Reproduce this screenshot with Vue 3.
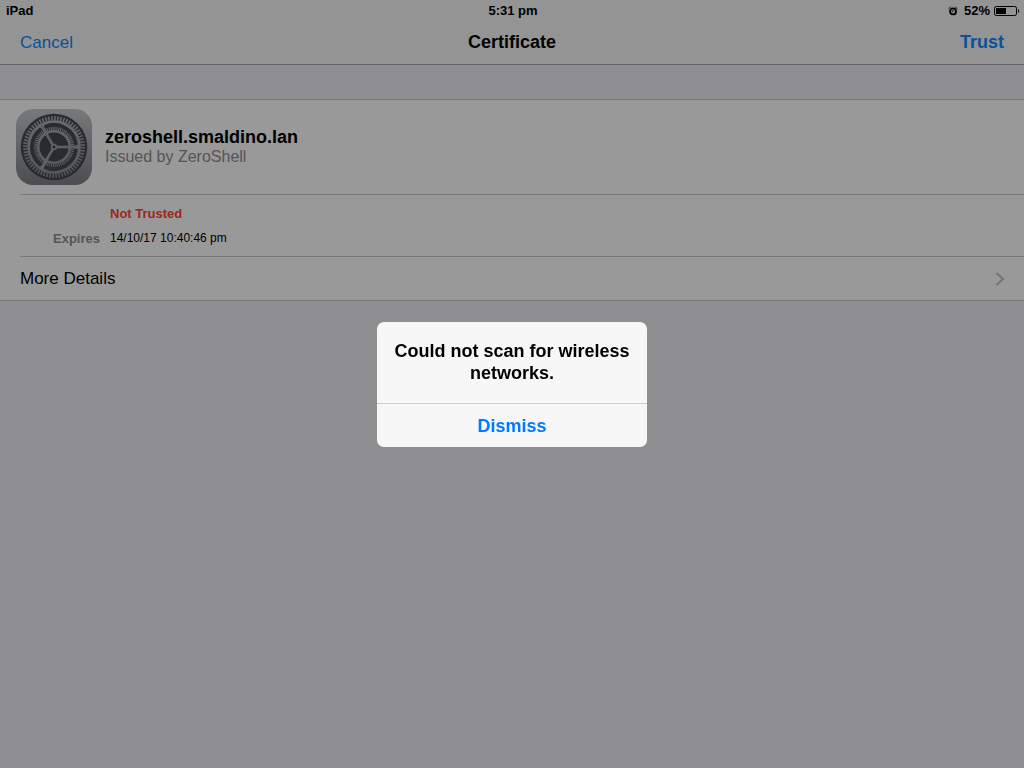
<script setup>
const point = (radius, degrees) => {
  const a = (degrees * Math.PI) / 180
  return `${(radius * Math.cos(a)).toFixed(2)} ${(radius * Math.sin(a)).toFixed(2)}`
}

const sector = (radius, inner, from, to) =>
  `M${point(inner, from)}L${point(radius, from)}A${radius} ${radius} 0 0 1 ${point(radius, to)}L${point(inner, to)}A${inner} ${inner} 0 0 0 ${point(inner, from)}Z`

const slots = [[8, 112], [128, 232], [248, 352]].map(([a, b]) => sector(22.5, 18.5, a, b))
const spokes = [0, 120, 240].map((a) => `M0 0L${point(26, a)}`)
</script>

<template>
  <div class="screen">
    <header class="top">
      <div class="status">
        <span>iPad</span>
        <span>5:31 pm</span>
        <span class="power">
          <svg class="alarm" width="10" height="10" viewBox="0 0 10 10" aria-hidden="true">
            <circle cx="5" cy="5.4" r="3" fill="none" stroke="#000" stroke-width="1.8" />
            <path d="M.6 2.8 2.6 1M7.4 1l2 1.8" stroke="#000" stroke-width="1" />
            <path d="M5 3.400V5.6H3.6" fill="none" stroke="#000" stroke-width=".8" />
          </svg>
          <span>52%</span>
          <svg class="battery" width="26" height="10" viewBox="0 0 26 10" aria-hidden="true">
            <rect x="0.5" y="0.5" width="22" height="9" rx="1.8" fill="none" stroke="#000" />
            <rect x="2" y="2" width="10" height="6" fill="#000" />
            <path d="M24 3c1.3.4 1.3 3.6 0 4z" fill="#000" />
          </svg>
        </span>
      </div>
      <nav class="bar">
        <button type="button">Cancel</button>
        <h1>Certificate</h1>
        <button type="button" class="trust">Trust</button>
      </nav>
    </header>

    <main class="group">
      <section class="identity">
        <svg class="gear" width="76" height="76" viewBox="-38 -38 76 76" aria-hidden="true">
          <defs>
            <linearGradient id="plate" x1="0" y1="0" x2="0" y2="1">
              <stop offset="0" stop-color="#c8cacc" />
              <stop offset="1" stop-color="#7e8085" />
            </linearGradient>
            <linearGradient id="metal" gradientUnits="userSpaceOnUse" x1="0" y1="-32" x2="0" y2="32">
              <stop offset="0" stop-color="#b4b6b9" />
              <stop offset="1" stop-color="#8b8c90" />
            </linearGradient>
          </defs>
          <rect x="-38" y="-38" width="76" height="76" rx="17" fill="url(#plate)" />
          <circle r="33.3" fill="#47494b" />
          <circle r="26.8" fill="url(#metal)" />
          <circle r="28.700" fill="none" stroke="url(#metal)" stroke-width="4.4" stroke-dasharray="1.5 1.505" />
          <path v-for="d in slots" :key="d" :d="d" fill="#47494b" stroke="#47494b" stroke-width="3" stroke-linejoin="round" />
          <circle r="18.5" fill="none" stroke="url(#metal)" stroke-width="3.4" stroke-dasharray="1 .937" />
          <circle r="14.5" fill="#47494b" />
          <g fill="none" stroke="#a0a1a5" stroke-width="2.6">
            <path v-for="d in spokes" :key="d" :d="d" />
          </g>
          <circle r="3.2" fill="#a0a1a5" />
          <circle r="1.3" fill="#333" />
        </svg>
        <div>
          <h2>zeroshell.smaldino.lan</h2>
          <p>Issued by ZeroShell</p>
        </div>
      </section>
      <dl class="facts">
        <dt></dt>
        <dd class="warn">Not Trusted</dd>
        <dt>Expires</dt>
        <dd>14/10/17 10:40:46 pm</dd>
      </dl>
      <button type="button" class="more">
        <span>More Details</span>
        <svg width="10" height="14" viewBox="0 0 10 14" aria-hidden="true">
          <path d="M1.5 1 8 7l-6.5 6" fill="none" stroke="#c2c2c7" stroke-width="2" />
        </svg>
      </button>
    </main>

    <div class="shade">
      <div class="alert" role="alertdialog" aria-modal="true" aria-labelledby="alert-title">
        <p id="alert-title">Could not scan for wireless networks.</p>
        <button type="button">Dismiss</button>
      </div>
    </div>
  </div>
</template>

<style>
body {
  margin: 0;
  background: #efeff4;
}
</style>

<style scoped>
.screen {
  min-height: 100vh;
  background: #efeff4;
  color: #000;
  font-family: "Liberation Sans", Arial, sans-serif;
  font-size: 17px;
}
h1,
h2,
p,
dl,
dd {
  margin: 0;
}
button {
  padding: 0;
  border: 0;
  background: none;
  color: #007aff;
  font: inherit;
  text-align: left;
}
.top {
  background: #f7f7f7;
  border-bottom: 1px solid #a7a7aa;
}
.top button {
  color: #0f88ff;
}
.status,
.bar {
  display: grid;
  grid-template-columns: 1fr auto 1fr;
  align-items: center;
}
.status {
  height: 20px;
  padding: 1px 4px 0 6px;
  box-sizing: border-box;
  font-size: 13px;
  font-weight: bold;
}
.power {
  display: flex;
  justify-content: flex-end;
  align-items: center;
}
.alarm {
  margin-right: 6px;
}
.battery {
  margin-left: 4px;
}
.bar {
  height: 44px;
  padding: 1px 20px 0;
  box-sizing: border-box;
}
h1,
h2,
.bar .trust {
  font-size: 18px;
  font-weight: bold;
}
.bar .trust {
  justify-self: end;
}
.group {
  margin-top: 34px;
  background: #fff;
  border-top: 1px solid #c8c7cc;
  border-bottom: 1px solid #c8c7cc;
}
.identity {
  display: flex;
  align-items: center;
  gap: 13px;
  height: 94px;
  padding-left: 16px;
}
h2,
.identity p {
  line-height: 20px;
}
.identity p {
  color: #8e8e93;
  font-size: 16px;
}
.facts {
  display: grid;
  grid-template-columns: 80px 1fr;
  column-gap: 10px;
  margin-left: 20px;
  padding: 6px 0 5px;
  border-top: 1px solid #c8c7cc;
  border-bottom: 1px solid #c8c7cc;
  font-size: 12px;
  line-height: 25px;
}
dt,
.warn {
  font-size: 13px;
  font-weight: bold;
}
dt {
  color: #8e8e93;
  text-align: right;
}
.warn {
  color: #ff453a;
}
.more {
  display: flex;
  justify-content: space-between;
  align-items: center;
  width: 100%;
  height: 43px;
  padding: 0 19px 0 20px;
  color: #000;
}
.shade {
  position: fixed;
  inset: 0;
  display: flex;
  align-items: center;
  justify-content: center;
  background: rgba(0, 0, 0, 0.4);
}
.alert {
  width: 270px;
  overflow: hidden;
  border-radius: 7px;
  background: #f7f7f7;
  font-size: 18px;
  font-weight: bold;
  text-align: center;
}
.alert p {
  padding: 18px 12px 19px;
  line-height: 22px;
}
.alert button {
  width: 100%;
  height: 44px;
  padding-top: 2px;
  border-top: 1px solid #cdcdd0;
  text-align: center;
}
</style>
